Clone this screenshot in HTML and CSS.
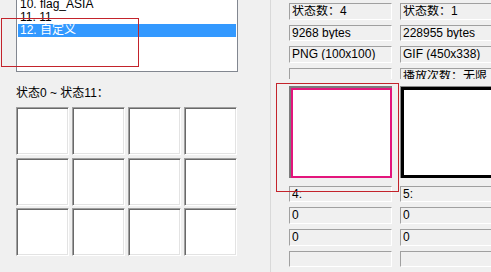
FILE: index.html
```html
<!doctype html>
<html>
<head>
<meta charset="utf-8">
<title>状态编辑</title>
<link rel="stylesheet" href="styles.css">
</head>
<body>
<div class="app">
    <div class="pane-left">
        <div class="list">
            <div class="item">10. flag_ASIA</div>
            <div class="item">11. 11</div>
            <div class="item selected">12. 自定义</div>
        </div>
        <div class="label">状态0 ~ 状态11：</div>
        <div class="cells">
            <div class="cell"></div><div class="cell"></div><div class="cell"></div><div class="cell"></div>
            <div class="cell"></div><div class="cell"></div><div class="cell"></div><div class="cell"></div>
            <div class="cell"></div><div class="cell"></div><div class="cell"></div><div class="cell"></div>
        </div>
    </div>
    <div class="pane-right">
        <div class="col">
            <div class="field"><span>状态数：4</span></div>
            <div class="field"><span>9268 bytes</span></div>
            <div class="field"><span>PNG (100x100)</span></div>
            <div class="field field-cut"><span></span></div>
            <div class="pic pic-pink"></div>
            <div class="field"><span>4:</span></div>
            <div class="field"><span>0</span></div>
            <div class="field"><span>0</span></div>
            <div class="field"><span></span></div>
        </div>
        <div class="col">
            <div class="field"><span>状态数：1</span></div>
            <div class="field"><span>228955 bytes</span></div>
            <div class="field"><span>GIF (450x338)</span></div>
            <div class="field field-cut"><span>播放次数：无限</span></div>
            <div class="pic pic-black"></div>
            <div class="field"><span>5:</span></div>
            <div class="field"><span>0</span></div>
            <div class="field"><span>0</span></div>
            <div class="field"><span></span></div>
        </div>
    </div>
    <div class="mark mark-list"></div>
    <div class="mark mark-pic"></div>
</div>
</body>
</html>
```

FILE: styles.css
```css
html, body { margin: 0; padding: 0; }
body { background: #f0f0f0; font-family: "Liberation Sans", "Noto Sans CJK SC", sans-serif; font-size: 12px; color: #000; overflow: hidden; }
.app { position: relative; display: flex; width: 491px; height: 272px; overflow: hidden; }

.pane-left { width: 271px; flex: none; box-sizing: border-box; padding-left: 16px; border-right: 1px solid #d9d9d9; }
.list { width: 222px; height: 74px; margin-top: -2px; box-sizing: border-box; border: 1px solid #828790; padding: 0 1px; background: #fff; overflow: hidden; }
.item { height: 13px; line-height: 13px; padding-left: 2px; white-space: nowrap; }
.item:first-child { margin-top: -1px; }
.item.selected { background: #3399ff; color: #fff; }
.label { margin-top: 14px; line-height: 14px; height: 14px; }
.cells { display: grid; grid-template-columns: repeat(4, 53px); grid-auto-rows: 48px; column-gap: 3px; row-gap: 2.5px; margin-top: 7px; }
.cell { background: #fff; border: 1px solid; border-color: #a0a0a0 #fff #fff #a0a0a0; box-shadow: inset 1px 1px 0 #696969, inset -1px -1px 0 #e3e3e3; }

.pane-right { display: flex; gap: 8px; padding: 3px 0 0 18px; flex: none; }
.col { width: 103px; flex: none; display: flex; flex-direction: column; }
.field { height: 17px; box-sizing: border-box; border: 1px solid; border-color: #a0a0a0 #fff #fff #a0a0a0; padding: 1px 2px 0; margin-bottom: 5px; overflow: hidden; white-space: nowrap; }
.field span { display: block; height: 12px; line-height: 13px; overflow: hidden; }
.field-cut { height: 12px; border-bottom: none; margin-bottom: 0; }
.pic { height: 95px; margin: 7px 0 8px; box-sizing: border-box; background: #fff; }
.pic-pink { border-top: 2px solid #7b7b7b; border-left: 2px solid #7b7b7b; box-shadow: inset 0 0 0 2px #e3157c; }
.pic-black { border-top: 1px solid #8a8a8a; border-left: 1px solid #8a8a8a; box-shadow: inset 0 0 0 3px #000; }

.mark { position: absolute; border: 1px solid #c3232b; }
.mark-list { left: 1px; top: 18px; width: 136px; height: 47px; }
.mark-pic { left: 276px; top: 83px; width: 121px; height: 107px; }
```
